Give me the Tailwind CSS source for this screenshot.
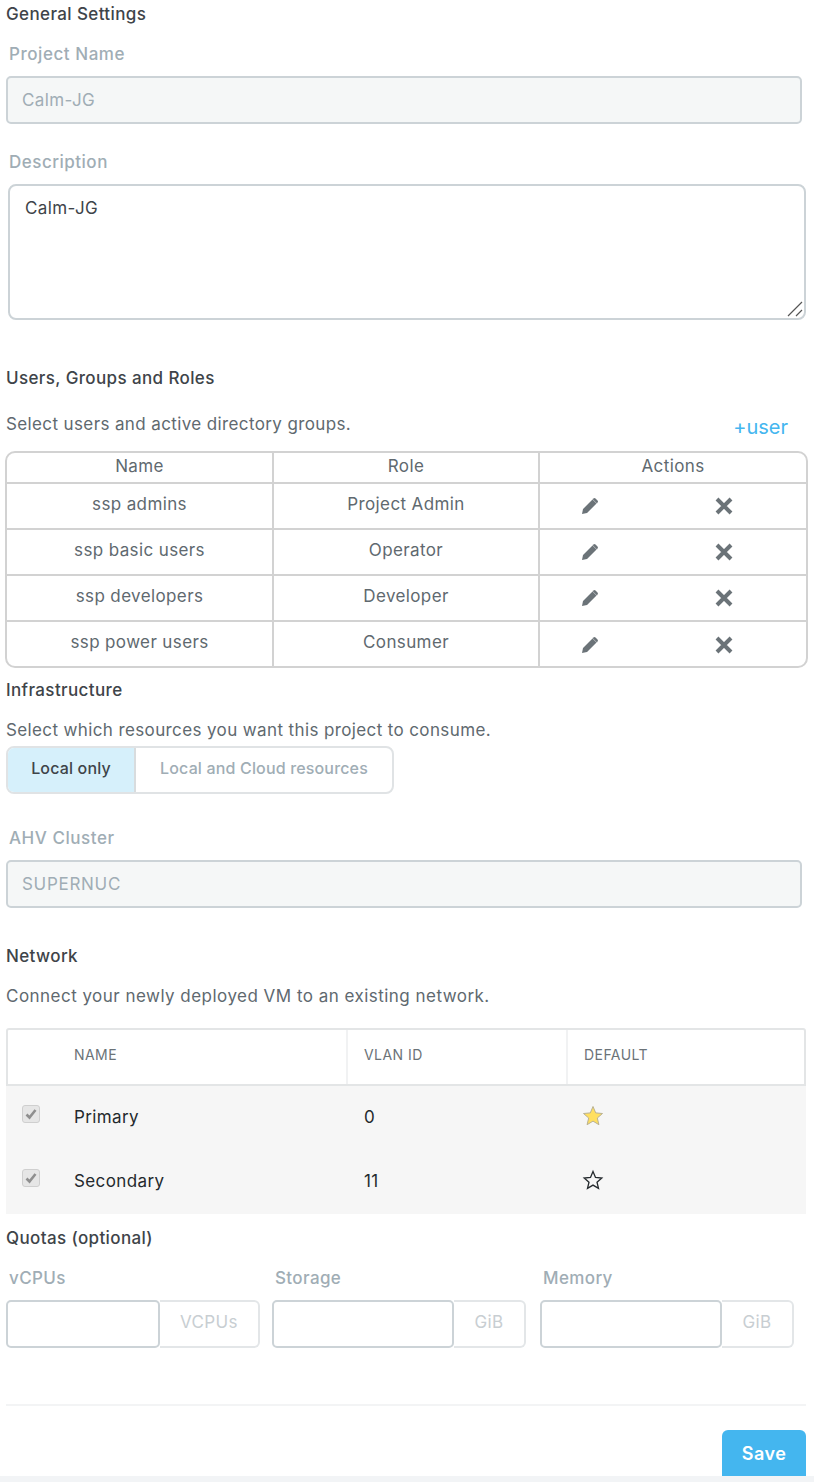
<!DOCTYPE html>
<html lang="en">
<head>
  <meta charset="UTF-8">
  <meta name="viewport" content="width=device-width, initial-scale=1.0">
  <title>Project Settings</title>
  <script src="https://cdn.jsdelivr.net/npm/@tailwindcss/browser@4"></script>
</head>
<body class="bg-white font-['Inter','Noto_Sans',sans-serif] text-[#60696f] text-[17px] tracking-[0.38px] h-[1482px] w-[814px] overflow-hidden">
  <div class="h-[1476px] flex flex-col">

    <!-- General settings -->
    <h3 class="h-[28px] leading-[28px] pl-[6px] font-medium text-[#3e4449]">General Settings</h3>
    <label class="mt-[14px] h-[24px] leading-[24px] pl-[9px] font-medium tracking-[0.55px] text-[#a0adb5]">Project Name</label>
    <div class="mt-[10px] ml-[6px] w-[796px] h-[48px] flex items-center pl-[14px] pt-[1px] bg-[#f5f7f7] border-2 border-[#ccd3d7] rounded-[5px] text-[#a0adb5]">Calm-JG</div>
    <label class="mt-[26px] h-[24px] leading-[24px] pl-[9px] font-medium tracking-[0.5px] text-[#a0adb5]">Description</label>
    <div class="relative mt-[10px] ml-[8px] w-[798px] h-[136px] pl-[15px] pt-[10px] border-2 border-[#ccd3d7] rounded-[8px] text-[#3e4449]">
      Calm-JG
      <svg class="absolute right-[1px] bottom-[1px]" width="16" height="16" viewBox="0 0 16 16" fill="none" stroke="#555" stroke-width="1.2"><path d="M1 15 15 1M9 15l6-6"/></svg>
    </div>

    <!-- Users -->
    <h3 class="mt-[44px] h-[28px] leading-[28px] pl-[6px] font-medium text-[#3e4449]">Users, Groups and Roles</h3>
    <div class="mt-[18px] h-[28px] pl-[6px] pr-[26px] flex justify-between">
      <span class="leading-[28px]">Select users and active directory groups.</span>
      <a class="text-[#44b6ef] text-[20px] tracking-normal leading-[34px] font-normal">+user</a>
    </div>
    <div class="mt-[13px] ml-[5px] w-[803px] h-[217px] border-2 border-[#d2d2d2] rounded-[10px] flex flex-col">
      <div class="h-[31px] grid grid-cols-[267px_266px_1fr] text-center leading-[26px] border-b-2 border-[#d2d2d2]">
        <div class="border-r-2 border-[#d2d2d2]">Name</div>
        <div class="border-r-2 border-[#d2d2d2]">Role</div>
        <div>Actions</div>
      </div>
      <div class="h-[46px] grid grid-cols-[267px_266px_1fr] text-center leading-[40px] border-b-2 border-[#d2d2d2]">
        <div class="border-r-2 border-[#d2d2d2]">ssp admins</div>
        <div class="border-r-2 border-[#d2d2d2]">Project Admin</div>
        <div class="flex items-center">
          <svg class="ml-[41px]" width="18" height="18" viewBox="0 0 18 18" fill="#6b7378"><path d="M1 17l1-5L11.500 2.500l4 4L6 16zM12.500 1.500a1.400 1.400 0 0 1 2 0l2 2a1.400 1.400 0 0 1 0 2L16 6.500 11.500 2z"/></svg>
          <svg class="ml-[116px]" width="18" height="18" viewBox="0 0 18 18" fill="none" stroke="#6b7378" stroke-width="4"><path d="M2 2l14 14M16 2 2 16"/></svg>
        </div>
      </div>
      <div class="h-[46px] grid grid-cols-[267px_266px_1fr] text-center leading-[40px] border-b-2 border-[#d2d2d2]">
        <div class="border-r-2 border-[#d2d2d2]">ssp basic users</div>
        <div class="border-r-2 border-[#d2d2d2]">Operator</div>
        <div class="flex items-center">
          <svg class="ml-[41px]" width="18" height="18" viewBox="0 0 18 18" fill="#6b7378"><path d="M1 17l1-5L11.500 2.500l4 4L6 16zM12.500 1.500a1.400 1.400 0 0 1 2 0l2 2a1.400 1.400 0 0 1 0 2L16 6.500 11.500 2z"/></svg>
          <svg class="ml-[116px]" width="18" height="18" viewBox="0 0 18 18" fill="none" stroke="#6b7378" stroke-width="4"><path d="M2 2l14 14M16 2 2 16"/></svg>
        </div>
      </div>
      <div class="h-[46px] grid grid-cols-[267px_266px_1fr] text-center leading-[40px] border-b-2 border-[#d2d2d2]">
        <div class="border-r-2 border-[#d2d2d2]">ssp developers</div>
        <div class="border-r-2 border-[#d2d2d2]">Developer</div>
        <div class="flex items-center">
          <svg class="ml-[41px]" width="18" height="18" viewBox="0 0 18 18" fill="#6b7378"><path d="M1 17l1-5L11.500 2.500l4 4L6 16zM12.500 1.500a1.400 1.400 0 0 1 2 0l2 2a1.400 1.400 0 0 1 0 2L16 6.500 11.500 2z"/></svg>
          <svg class="ml-[116px]" width="18" height="18" viewBox="0 0 18 18" fill="none" stroke="#6b7378" stroke-width="4"><path d="M2 2l14 14M16 2 2 16"/></svg>
        </div>
      </div>
      <div class="h-[44px] grid grid-cols-[267px_266px_1fr] text-center leading-[40px]">
        <div class="border-r-2 border-[#d2d2d2]">ssp power users</div>
        <div class="border-r-2 border-[#d2d2d2]">Consumer</div>
        <div class="flex items-center pt-[1px]">
          <svg class="ml-[41px]" width="18" height="18" viewBox="0 0 18 18" fill="#6b7378"><path d="M1 17l1-5L11.500 2.500l4 4L6 16zM12.500 1.500a1.400 1.400 0 0 1 2 0l2 2a1.400 1.400 0 0 1 0 2L16 6.500 11.500 2z"/></svg>
          <svg class="ml-[116px]" width="18" height="18" viewBox="0 0 18 18" fill="none" stroke="#6b7378" stroke-width="4"><path d="M2 2l14 14M16 2 2 16"/></svg>
        </div>
      </div>
    </div>

    <!-- Infrastructure -->
    <h3 class="mt-[8px] h-[28px] leading-[28px] pl-[6px] font-medium text-[#3e4449]">Infrastructure</h3>
    <p class="mt-[12px] h-[28px] leading-[28px] pl-[6px]">Select which resources you want this project to consume.</p>
    <div class="mt-[2px] ml-[6px] w-[388px] h-[48px] flex border-2 border-[#e0e3e5] rounded-[8px] overflow-hidden text-[16px] tracking-[0.16px] font-medium">
      <div class="w-[128px] pb-[4px] bg-[#d6f0fb] border-r-2 border-[#d8dcde] flex items-center justify-center text-[#3e4449]">Local only</div>
      <div class="flex-1 pb-[4px] flex items-center justify-center text-[#a0adb5]">Local and Cloud resources</div>
    </div>
    <label class="mt-[32px] h-[24px] leading-[24px] pl-[9px] font-medium tracking-[0.55px] text-[#a0adb5]">AHV Cluster</label>
    <div class="mt-[10px] ml-[6px] w-[796px] h-[48px] flex items-center pl-[14px] pt-[1px] bg-[#f5f7f7] border-2 border-[#ccd3d7] rounded-[5px] tracking-[0.7px] text-[#a0adb5]">SUPERNUC</div>

    <!-- Network -->
    <h3 class="mt-[34px] h-[28px] leading-[28px] pl-[6px] font-medium text-[#3e4449]">Network</h3>
    <p class="mt-[12px] h-[28px] leading-[28px] pl-[6px] tracking-[0.47px]">Connect your newly deployed VM to an existing network.</p>
    <div class="mt-[18px] ml-[6px] w-[800px] h-[186px] flex flex-col text-[#24292d]">
      <div class="h-[58px] grid grid-cols-[340px_220px_1fr] items-stretch text-[14px] tracking-[0.45px] text-[#6b7378] font-normal border-2 border-[#e3e5e6] rounded-t-[3px]">
        <div class="pl-[66px] pb-[6px] flex items-center border-r-2 border-[#f1f2f3]">NAME</div>
        <div class="pl-[16px] pb-[6px] flex items-center border-r-2 border-[#f1f2f3]">VLAN ID</div>
        <div class="pl-[16px] pb-[6px] flex items-center">DEFAULT</div>
      </div>
      <div class="h-[64px] grid grid-cols-[341px_220px_1fr] items-center bg-[#f6f6f6]">
        <div class="flex items-center pl-[16px]">
          <span class="w-[18px] h-[18px] bg-[#e6e6e6] border border-[#cfcfcf] rounded-[3px] flex items-center justify-center mb-[8px]">
            <svg width="12" height="12" viewBox="0 0 12 12" fill="none" stroke="#8f8f8f" stroke-width="2.600"><path d="M1.500 6.500 4.500 9.500 10.500 2"/></svg>
          </span>
          <span class="ml-[34px]">Primary</span>
        </div>
        <div class="pl-[17px]">0</div>
        <div class="pl-[15px]">
          <svg class="block mb-[4px]" width="22" height="22" viewBox="0 0 22 22" fill="#ffdf60" stroke="#b9b191" stroke-width="1"><path d="M11 1.500l2.700 6.400 6.800.6-5.200 4.500 1.600 6.700L11 16.100l-5.900 3.600 1.600-6.700L1.500 8.500l6.800-.6z"/></svg>
        </div>
      </div>
      <div class="h-[64px] grid grid-cols-[341px_220px_1fr] items-center bg-[#f6f6f6]">
        <div class="flex items-center pl-[16px]">
          <span class="w-[18px] h-[18px] bg-[#e6e6e6] border border-[#cfcfcf] rounded-[3px] flex items-center justify-center mb-[8px]">
            <svg width="12" height="12" viewBox="0 0 12 12" fill="none" stroke="#8f8f8f" stroke-width="2.600"><path d="M1.500 6.500 4.500 9.500 10.500 2"/></svg>
          </span>
          <span class="ml-[34px]">Secondary</span>
        </div>
        <div class="pl-[17px]">11</div>
        <div class="pl-[15px]">
          <svg class="block mb-[4px]" width="22" height="22" viewBox="0 0 22 22" fill="none" stroke="#24292d" stroke-width="1.300"><path d="M11 2.500l2.500 5.900 6.300.6-4.800 4.200 1.500 6.200L11 16.100l-5.500 3.300L7 13.200 2.200 9l6.300-.6z"/></svg>
        </div>
      </div>
    </div>

    <!-- Quotas -->
    <h3 class="mt-[10px] h-[28px] leading-[28px] pl-[6px] font-medium text-[#3e4449]">Quotas (optional)</h3>
    <div class="mt-[14px] pl-[6px] flex text-[#a0adb5]">
      <div class="w-[266px]">
        <label class="block h-[24px] leading-[24px] pl-[3px] font-medium">vCPUs</label>
        <div class="mt-[10px] flex h-[48px]">
          <div class="w-[154px] border-2 border-[#ccd3d7] rounded-[5px]"></div>
          <div class="w-[100px] pb-[2px] flex items-center justify-center border-2 border-l-0 border-[#e3e6e8] rounded-r-[6px] text-[#c8ced2]">VCPUs</div>
        </div>
      </div>
      <div class="w-[268px]">
        <label class="block h-[24px] leading-[24px] pl-[3px] font-medium">Storage</label>
        <div class="mt-[10px] flex h-[48px]">
          <div class="w-[182px] border-2 border-[#ccd3d7] rounded-[5px]"></div>
          <div class="w-[72px] pb-[2px] flex items-center justify-center border-2 border-l-0 border-[#e3e6e8] rounded-r-[6px] text-[#c8ced2]">GiB</div>
        </div>
      </div>
      <div>
        <label class="block h-[24px] leading-[24px] pl-[3px] font-medium">Memory</label>
        <div class="mt-[10px] flex h-[48px]">
          <div class="w-[182px] border-2 border-[#ccd3d7] rounded-[5px]"></div>
          <div class="w-[72px] pb-[2px] flex items-center justify-center border-2 border-l-0 border-[#e3e6e8] rounded-r-[6px] text-[#c8ced2]">GiB</div>
        </div>
      </div>
    </div>

    <!-- Footer -->
    <div class="mt-[56px] ml-[6px] w-[800px] border-t-2 border-[#f3f4f5]"></div>
    <div class="mt-[24px] mr-[8px] flex justify-end">
      <button class="w-[84px] h-[46px] bg-[#44b6ef] rounded-t-[6px] text-white font-semibold text-[18px] tracking-[0.5px]">Save</button>
    </div>
  </div>
  <div class="h-[6px] bg-[#f2f4f6]"></div>
</body>
</html>
